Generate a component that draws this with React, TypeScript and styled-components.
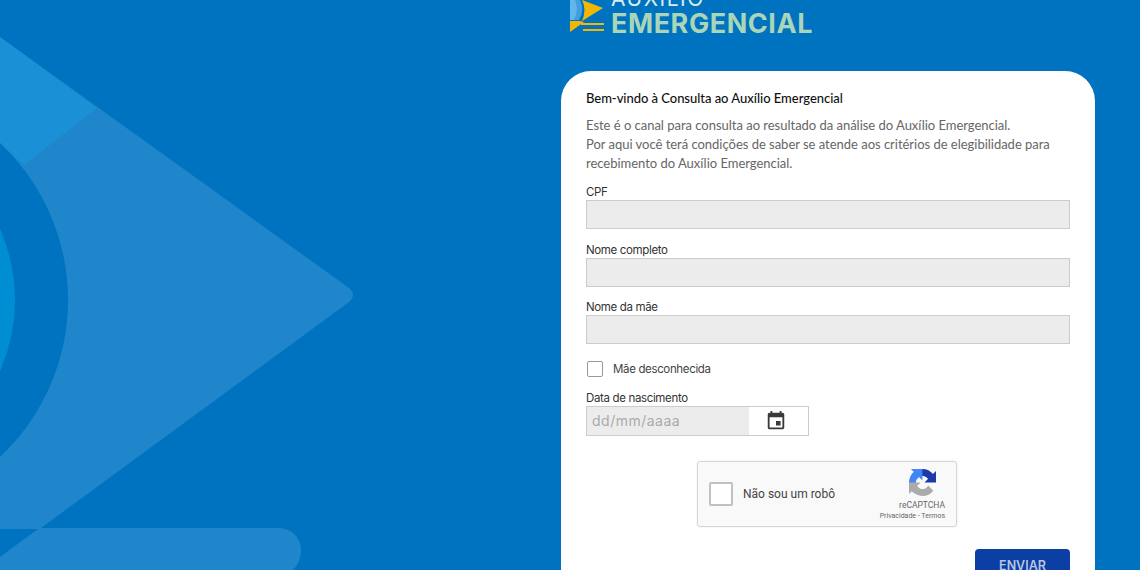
import React from 'react';
import styled, { createGlobalStyle } from 'styled-components';
import { MdEvent } from 'react-icons/md';

const GlobalStyle = createGlobalStyle`
    html, body {
        margin: 0;
        padding: 0;
        background-color: #0073c0;
        font-family: "Lato", "Liberation Sans", sans-serif;
    }
    * {
        box-sizing: border-box;
    }
`;

const Page = styled.div`
    position: relative;
    display: flex;
    justify-content: flex-end;
    height: 570px;
    padding-right: 45px;
    overflow: hidden;
    background-color: #0073c0;
`;

const Backdrop = styled.svg`
    position: absolute;
    top: 0;
    left: 0;
`;

const Column = styled.main`
    position: relative;
    display: flex;
    flex-direction: column;
    flex-shrink: 0;
    width: 534px;
`;

const Logo = styled.div`
    display: flex;
    flex-shrink: 0;
    gap: 6px;
    height: 71px;
    margin-left: 9px;
    overflow: hidden;
`;

const LogoMark = styled.svg`
    flex-shrink: 0;
`;

const LogoText = styled.div`
    display: flex;
    flex-direction: column;
    margin-top: -13px;
    font-family: "Inter", "Liberation Sans", sans-serif;
`;

const LogoTop = styled.span`
    font-size: 21px;
    line-height: 23px;
    font-weight: 400;
    letter-spacing: 1.5px;
    color: #d8ecf0;
`;

const LogoBottom = styled.span`
    font-size: 27px;
    line-height: 27px;
    font-weight: 700;
    letter-spacing: 0.55px;
    color: #a9d6b8;
`;

const Card = styled.section`
    display: flex;
    flex-direction: column;
    flex-shrink: 0;
    padding: 18px 25px 30px;
    background-color: #fff;
    border-radius: 30px;
`;

const Title = styled.h1`
    margin: 0 0 9px;
    font-size: 13px;
    line-height: 18px;
    font-weight: 500;
    letter-spacing: -0.04px;
    color: #111;
`;

const Intro = styled.p`
    margin: 0 0 11px;
    font-size: 13px;
    line-height: 19px;
    letter-spacing: -0.02px;
    color: #666;
`;

const Field = styled.div`
    display: flex;
    flex-direction: column;
    margin-bottom: 12.5px;
`;

const Label = styled.label`
    padding-top: 1px;
    font-family: "Inter", "Liberation Sans", sans-serif;
    font-size: 11.5px;
    line-height: 15px;
    letter-spacing: -0.35px;
    color: #333;
`;

const TextInput = styled.div`
    height: 29px;
    background-color: #ececec;
    border: 1px solid #ccc;
`;

const CheckRow = styled.div`
    display: flex;
    align-items: center;
    gap: 10px;
    margin: 4px 0 13px 1px;
`;

const CheckBox = styled.span`
    width: 16px;
    height: 16px;
    background-color: #fff;
    border: 1px solid #999;
    border-radius: 2px;
`;

const CheckLabel = styled.span`
    font-family: "Inter", "Liberation Sans", sans-serif;
    font-size: 11.5px;
    line-height: 16px;
    letter-spacing: -0.35px;
    color: #444;
`;

const DateInput = styled.div`
    display: flex;
    width: 223px;
    height: 30px;
    border: 1px solid #ccc;
`;

const DateValue = styled.div`
    display: flex;
    align-items: center;
    width: 162px;
    padding-left: 5px;
    font-family: "Inter", "Liberation Sans", sans-serif;
    font-size: 14px;
    letter-spacing: 0.5px;
    color: #aaa;
    background-color: #ececec;
`;

const DateIcon = styled.div`
    display: flex;
    flex: 1;
    align-items: center;
    justify-content: center;
    padding-right: 6px;
    color: #3a3a3a;
`;

const Captcha = styled.div`
    display: flex;
    align-items: center;
    align-self: center;
    width: 260px;
    height: 66px;
    margin: 13px 2px 22px 0;
    padding: 0 11px;
    background-color: #f9f9f9;
    border: 1px solid #d6d6d6;
    border-radius: 3px;
    box-shadow: 0 0 3px rgba(0, 0, 0, 0.08);
    font-family: "Roboto", "Liberation Sans", sans-serif;
`;

const CaptchaBox = styled.span`
    width: 24px;
    height: 24px;
    background-color: #fff;
    border: 2px solid #c1c1c1;
    border-radius: 2px;
`;

const CaptchaText = styled.span`
    flex: 1;
    margin-left: 10px;
    font-size: 12px;
    color: #444;
`;

const CaptchaBrand = styled.div`
    display: flex;
    flex-direction: column;
    align-items: flex-end;
    margin-top: 3px;
`;

const CaptchaMark = styled.svg`
    margin: 0 9px 3px 0;
`;

const CaptchaName = styled.span`
    font-size: 8.5px;
    line-height: 12px;
    color: #666;
`;

const CaptchaLinks = styled.span`
    font-size: 7px;
    line-height: 11px;
    color: #666;
`;

const Actions = styled.div`
    display: flex;
    justify-content: flex-end;
`;

const SubmitButton = styled.button`
    width: 95px;
    height: 32px;
    padding: 0;
    font-family: "Inter", "Liberation Sans", sans-serif;
    font-size: 12.5px;
    font-weight: 600;
    color: #b6c6e4;
    background-color: #0b3fa3;
    border: 0;
    border-radius: 4px;
`;

const fields = ['CPF', 'Nome completo', 'Nome da mãe'];

function BackdropArt() {
    return (
        <Backdrop width="380" height="570" viewBox="0 0 380 570" aria-hidden="true">
            <path d="M0 37 L349 288 Q357 295 349 302 L0 558 Z" fill="#2086cb" />
            <path d="M0 37 L97 108 L24 165 L0 143 Z" fill="#1a91d6" />
            <path d="M0 528 H279 A22 22 0 0 1 301 550 Q301 562 293 570 H0 Z" fill="#2086cb" />
            <path d="M0 529 H38 L0 557 Z" fill="#0073c0" />
            <circle cx="-147" cy="300" r="215" fill="#0073c0" />
            <circle cx="-160" cy="300" r="175" fill="#008ed3" />
        </Backdrop>
    );
}

function App() {
    return (
        <Page>
            <GlobalStyle />
            <BackdropArt />
            <Column>
                <Logo>
                    <LogoMark width="35" height="34" viewBox="0 0 35 34" aria-hidden="true">
                        <path d="M0 0 H10 Q15 10 9 20 L0 20 Z" fill="#3f9fe0" />
                        <path d="M0 0 H5 Q9 10 4 20 L0 20 Z" fill="#63b5ea" />
                        <path d="M12 0 L33 8 L12 21 Q17 10 12 0 Z" fill="#f2b705" />
                        <path d="M0 21 H10 L14 22 L0 32 Z" fill="#f2b705" />
                        <rect x="11" y="23" width="23" height="2" fill="#f2b705" />
                        <rect x="13" y="29" width="21" height="2" fill="#f2b705" />
                    </LogoMark>
                    <LogoText>
                        <LogoTop>AUXÍLIO</LogoTop>
                        <LogoBottom>EMERGENCIAL</LogoBottom>
                    </LogoText>
                </Logo>
                <Card>
                    <Title>Bem-vindo à Consulta ao Auxílio Emergencial</Title>
                    <Intro>
                        Este é o canal para consulta ao resultado da análise do Auxílio Emergencial.
                        <br />
                        Por aqui você terá condições de saber se atende aos critérios de elegibilidade para
                        recebimento do Auxílio Emergencial.
                    </Intro>
                    {fields.map((field) => (
                        <Field key={field}>
                            <Label>{field}</Label>
                            <TextInput />
                        </Field>
                    ))}
                    <CheckRow>
                        <CheckBox />
                        <CheckLabel>Mãe desconhecida</CheckLabel>
                    </CheckRow>
                    <Field>
                        <Label>Data de nascimento</Label>
                        <DateInput>
                            <DateValue>dd/mm/aaaa</DateValue>
                            <DateIcon>
                                <MdEvent size={22} />
                            </DateIcon>
                        </DateInput>
                    </Field>
                    <Captcha>
                        <CaptchaBox />
                        <CaptchaText>Não sou um robô</CaptchaText>
                        <CaptchaBrand>
                            <CaptchaMark width="27" height="27" viewBox="0 0 64 64" aria-hidden="true">
                                <path d="M64 31.955l-.033-1.37V4.687l-7.16 7.16C50.948 4.674 42.033.093 32.05.093c-10.4 0-19.622 4.96-25.458 12.64l11.736 11.86a15.55 15.55 0 0 1 4.754-5.334c2.05-1.6 4.952-2.906 8.968-2.906.485 0 .86.057 1.135.163 4.976.393 9.288 3.14 11.828 7.124l-8.307 8.307c10.522-.04 22.4-.066 27.295.005" fill="#1c3aa9" />
                                <path d="M31.862.094l-1.37.033H4.6l7.16 7.16C4.587 13.14.006 22.054.006 32.037c0 10.4 4.96 19.622 12.64 25.458l11.86-11.736a15.55 15.55 0 0 1-5.334-4.754c-1.6-2.05-2.906-4.952-2.906-8.968 0-.485.057-.86.163-1.135.393-4.976 3.14-9.288 7.124-11.828l8.307 8.307c-.04-10.522-.066-22.4.005-27.295" fill="#4285f4" />
                                <path d="M.001 32.045l.033 1.37V59.313l7.16-7.16c5.86 7.173 14.775 11.754 24.757 11.754 10.4 0 19.622-4.96 25.458-12.64l-11.736-11.86a15.55 15.55 0 0 1-4.754 5.334c-2.05 1.6-4.952 2.906-8.968 2.906-.485 0-.86-.057-1.135-.163-4.976-.393-9.288-3.14-11.828-7.124l8.307-8.307c-10.522.04-22.4.066-27.295-.005" fill="#ababab" />
                            </CaptchaMark>
                            <CaptchaName>reCAPTCHA</CaptchaName>
                            <CaptchaLinks>Privacidade - Termos</CaptchaLinks>
                        </CaptchaBrand>
                    </Captcha>
                    <Actions>
                        <SubmitButton>ENVIAR</SubmitButton>
                    </Actions>
                </Card>
            </Column>
        </Page>
    );
}

export default App;
